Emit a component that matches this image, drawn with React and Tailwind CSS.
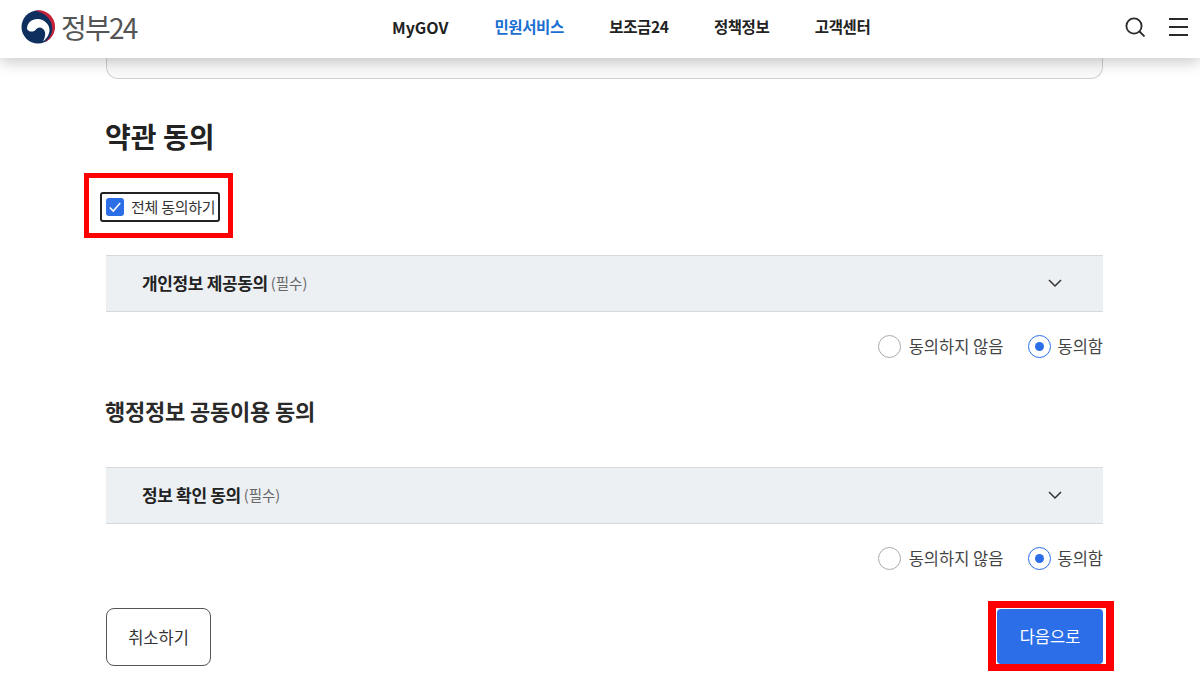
import React from "react";

const font = { fontFamily: '"Noto Sans CJK KR", "Noto Sans", sans-serif' };

function Logo() {
  return (
    <svg width="36" height="36" viewBox="0 0 36 36" className="block shrink-0">
      <circle cx="18" cy="18" r="16.500" fill="#0f2f5f" />
      <path d="M15 1.700A16.500 16.500 0 0 1 25 33C31 28 33 23 32 17C31 9 24 3.500 15 1.700Z" fill="#c8213c" />
      <path d="M7 20C7 13 13 9.500 18 10C24 10.500 29.500 15 29.500 21C29.500 25 27 29.500 23 32.500C26 27 26 22 22.500 19.500C19.500 17.500 17 19 15.500 21C13 23.500 8.500 23 7 20Z" fill="#fff" />
    </svg>
  );
}

function Chevron() {
  return (
    <svg width="16" height="16" viewBox="0 0 16 16" fill="none" stroke="#333" strokeWidth="1.500" className="block">
      <path d="M2 5l6 6 6-6" />
    </svg>
  );
}

function Accordion({ title }) {
  return (
    <div className="flex h-[57px] items-center justify-between border-y border-[#d6dadf] bg-[#edf0f3] pb-[2px] pl-9 pr-[40px]">
      <div className="flex items-center gap-[3px]">
        <span className="text-[17px] font-bold tracking-[-0.35px] text-[#222]">{title}</span>
        <span className="text-[14.5px] text-[#666]">(필수)</span>
      </div>
      <Chevron />
    </div>
  );
}

function Radios() {
  return (
    <div className="flex h-[69px] items-center justify-end gap-[25px] text-[16.5px] text-[#444]">
      <div className="flex items-center gap-[8px]">
        <span className="h-[23px] w-[23px] rounded-full border border-[#aaa] bg-white" />
        <span>동의하지 않음</span>
      </div>
      <div className="flex items-center gap-[6px]">
        <span className="flex h-[23px] w-[23px] items-center justify-center rounded-full border border-[#2b6ee8] bg-white">
          <span className="h-[9px] w-[9px] rounded-full bg-[#2b6ee8]" />
        </span>
        <span>동의함</span>
      </div>
    </div>
  );
}

export default function App() {
  return (
    <div style={font} className="relative h-[690px] w-[1200px] overflow-hidden bg-white">
      <header className="relative z-10 flex h-[58px] items-center bg-white pb-[4px] pl-[20px] pr-[12px] shadow-[0_4px_14px_rgba(0,0,0,0.22)]">
        <div className="flex w-[372px] items-center gap-[5px]">
          <Logo />
          <span className="text-[28px] leading-none tracking-[-1.8px] text-[#555]">정부24</span>
        </div>
        <nav className="flex gap-[45.5px] text-[15.5px] font-bold tracking-[-0.4px] text-[#222]">
          <span className="w-[57px] text-[16px] tracking-normal">MyGOV</span>
          <span className="text-[#1a6fd0]">민원서비스</span>
          <span>보조금24</span>
          <span>정책정보</span>
          <span>고객센터</span>
        </nav>
        <div className="ml-auto flex items-center gap-[24px]">
          <svg width="20" height="20" viewBox="0 0 20 20" fill="none" stroke="#2a2a2a" strokeWidth="1.800" className="block">
            <circle cx="9" cy="9" r="7.600" />
            <path d="M14.500 14.500L19.500 19.500" />
          </svg>
          <div className="flex h-[18px] w-[19px] flex-col justify-between">
            <span className="h-[2px] bg-[#2a2a2a]" />
            <span className="h-[2px] bg-[#2a2a2a]" />
            <span className="h-[2px] bg-[#2a2a2a]" />
          </div>
        </div>
      </header>

      <main className="ml-[106px] w-[997px]">
        <div className="h-[21px] rounded-b-[12px] border-x border-b border-[#cdd1d5] bg-[#fafafa]" />

        <h2 className="-ml-px mt-[37px] text-[28px] leading-[40px] font-bold text-[#222]">약관 동의</h2>

        <div className="-ml-[6px] mt-[36px] flex h-[30px] w-[120px] items-center gap-[7px] rounded-[3px] border-2 border-[#222] pl-[4px]">
          <span className="flex h-[18px] w-[18px] items-center justify-center rounded-[3px] bg-[#2b6ee8]">
            <svg width="14" height="14" viewBox="0 0 12 12" fill="none" stroke="#fff" strokeWidth="1.300">
              <path d="M1.500 6.500L4.500 9.500L10.500 2.500" />
            </svg>
          </span>
          <span className="whitespace-nowrap text-[15px] tracking-[-0.25px] text-[#333]">전체 동의하기</span>
        </div>

        <div className="mt-[33px]">
          <Accordion title="개인정보 제공동의" />
        </div>
        <Radios />

        <h3 className="-ml-px mt-[13px] text-[22px] leading-[32px] font-bold tracking-[-0.2px] text-[#2a2a2a]">행정정보 공동이용 동의</h3>

        <div className="mt-[41px]">
          <Accordion title="정보 확인 동의" />
        </div>
        <Radios />

        <div className="mt-[15px] flex items-start justify-between">
          <button className="flex h-[58px] w-[105px] items-center justify-center rounded-[8px] border border-[#555] bg-white text-[16.5px] text-[#333]">
            취소하기
          </button>
          <button className="mt-[1px] flex h-[55px] w-[106px] items-center justify-center rounded-[4px] bg-[#2b6ee8] text-[16.5px] text-white">
            다음으로
          </button>
        </div>
      </main>

      <div className="absolute left-[84px] top-[173px] h-[65px] w-[149px] border-[5px] border-[#f00]" />
      <div className="absolute left-[988px] top-[601px] h-[70px] w-[126px] border-x-[8px] border-y-[7px] border-[#f00]" />
    </div>
  );
}
